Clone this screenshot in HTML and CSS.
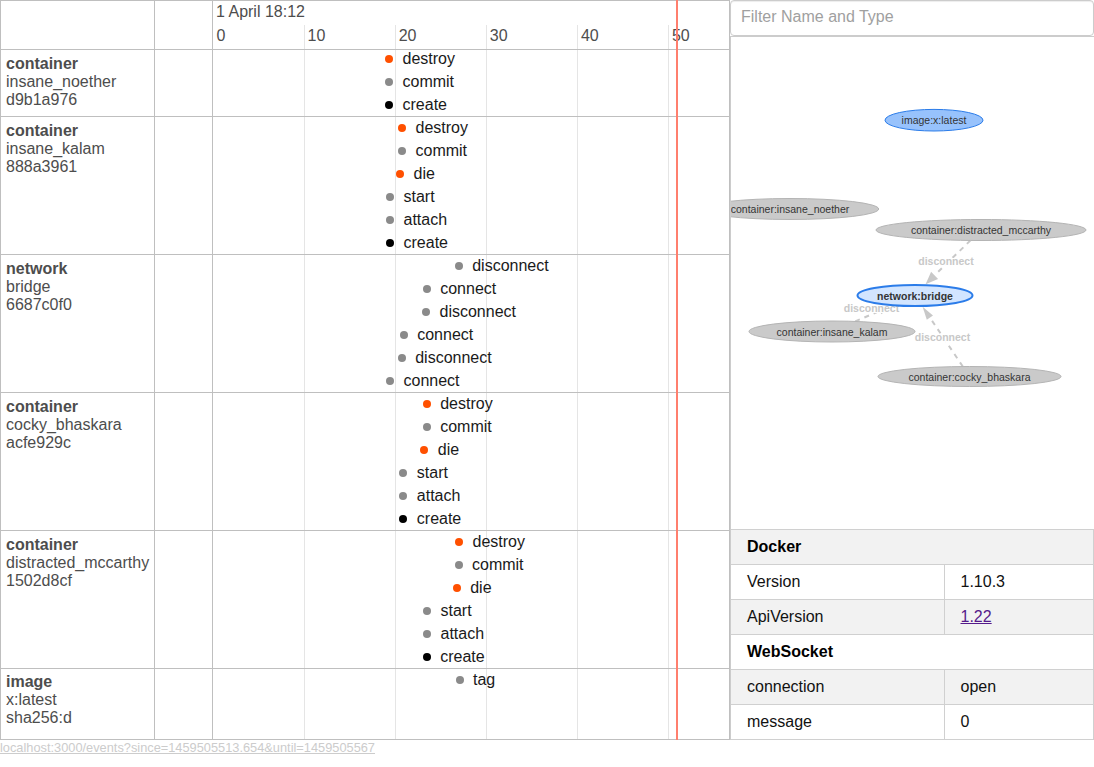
FILE: index.html
```html
<!DOCTYPE html>
<html lang="en">
<head>
<meta charset="utf-8">
<title>Docker events</title>
<link rel="stylesheet" href="styles.css">
</head>
<body>
<div class="app">
  <section class="timeline">
    <div class="grid-lines">
      <div class="gl"></div><div class="gl"></div><div class="gl"></div><div class="gl"></div><div class="gl"></div><div class="gl"></div>
    </div>

    <div class="row row--head">
      <div class="cell label"></div>
      <div class="cell spacer"></div>
      <div class="cell track axis">
        <div class="major">1 April 18:12</div>
        <div class="minor">
          <span class="tl">0</span><span class="tl">10</span><span class="tl">20</span><span class="tl">30</span><span class="tl">40</span><span class="tl">50</span>
        </div>
      </div>
    </div>

    <div class="row">
      <div class="cell label"><b>container</b><span>insane_noether</span><span>d9b1a976</span></div>
      <div class="cell spacer"></div>
      <div class="cell track">
        <ul class="events events--first">
          <li class="event" style="padding-left:172px"><i class="dot dot--alert"></i>destroy</li>
          <li class="event" style="padding-left:172px"><i class="dot"></i>commit</li>
          <li class="event" style="padding-left:172px"><i class="dot dot--create"></i>create</li>
        </ul>
      </div>
    </div>

    <div class="row">
      <div class="cell label"><b>container</b><span>insane_kalam</span><span>888a3961</span></div>
      <div class="cell spacer"></div>
      <div class="cell track">
        <ul class="events">
          <li class="event" style="padding-left:185px"><i class="dot dot--alert"></i>destroy</li>
          <li class="event" style="padding-left:185px"><i class="dot"></i>commit</li>
          <li class="event" style="padding-left:183px"><i class="dot dot--alert"></i>die</li>
          <li class="event" style="padding-left:173px"><i class="dot"></i>start</li>
          <li class="event" style="padding-left:173px"><i class="dot"></i>attach</li>
          <li class="event" style="padding-left:173px"><i class="dot dot--create"></i>create</li>
        </ul>
      </div>
    </div>

    <div class="row">
      <div class="cell label"><b>network</b><span>bridge</span><span>6687c0f0</span></div>
      <div class="cell spacer"></div>
      <div class="cell track">
        <ul class="events">
          <li class="event" style="padding-left:241.7px"><i class="dot"></i>disconnect</li>
          <li class="event" style="padding-left:209.7px"><i class="dot"></i>connect</li>
          <li class="event" style="padding-left:209px"><i class="dot"></i>disconnect</li>
          <li class="event" style="padding-left:186.7px"><i class="dot"></i>connect</li>
          <li class="event" style="padding-left:184.7px"><i class="dot"></i>disconnect</li>
          <li class="event" style="padding-left:173px"><i class="dot"></i>connect</li>
        </ul>
      </div>
    </div>

    <div class="row">
      <div class="cell label"><b>container</b><span>cocky_bhaskara</span><span>acfe929c</span></div>
      <div class="cell spacer"></div>
      <div class="cell track">
        <ul class="events">
          <li class="event" style="padding-left:209.7px"><i class="dot dot--alert"></i>destroy</li>
          <li class="event" style="padding-left:209.7px"><i class="dot"></i>commit</li>
          <li class="event" style="padding-left:207.3px"><i class="dot dot--alert"></i>die</li>
          <li class="event" style="padding-left:186.3px"><i class="dot"></i>start</li>
          <li class="event" style="padding-left:186.3px"><i class="dot"></i>attach</li>
          <li class="event" style="padding-left:186.3px"><i class="dot dot--create"></i>create</li>
        </ul>
      </div>
    </div>

    <div class="row">
      <div class="cell label"><b>container</b><span>distracted_mccarthy</span><span>1502d8cf</span></div>
      <div class="cell spacer"></div>
      <div class="cell track">
        <ul class="events">
          <li class="event" style="padding-left:242px"><i class="dot dot--alert"></i>destroy</li>
          <li class="event" style="padding-left:241.5px"><i class="dot"></i>commit</li>
          <li class="event" style="padding-left:239.7px"><i class="dot dot--alert"></i>die</li>
          <li class="event" style="padding-left:210px"><i class="dot"></i>start</li>
          <li class="event" style="padding-left:210px"><i class="dot"></i>attach</li>
          <li class="event" style="padding-left:209.7px"><i class="dot dot--create"></i>create</li>
        </ul>
      </div>
    </div>

    <div class="row row--last">
      <div class="cell label"><b>image</b><span>x:latest</span><span>sha256:d</span></div>
      <div class="cell spacer"></div>
      <div class="cell track">
        <ul class="events">
          <li class="event" style="padding-left:242.5px"><i class="dot"></i>tag</li>
        </ul>
      </div>
    </div>

    <div class="now" style="left:675px"></div>
  </section>

  <aside class="side">
    <input class="filter" type="text" placeholder="Filter Name and Type">
    <div class="panel">
      <div class="graph">
        <svg width="363" height="492" viewBox="0 0 363 492" xmlns="http://www.w3.org/2000/svg">
          <g class="edge">
            <line x1="239.5" y1="203.4" x2="203.6" y2="238.3"/>
            <polygon points="194.6,247.2 207.1,241.9 200.1,234.8"/>
            <line x1="124.2" y1="284.4" x2="148.9" y2="273.8"/>
            <polygon points="160.8,268.6 150.4,277.2 147.4,270.4"/>
            <line x1="231.8" y1="329.5" x2="198.9" y2="280.6"/>
            <polygon points="191.6,269.8 202,278.5 195.8,282.7"/>
          </g>
          <g class="edge-label">
            <text x="215" y="224">disconnect</text>
            <text x="140.5" y="270.5">disconnect</text>
            <text x="211.5" y="299.5">disconnect</text>
          </g>
          <g class="node node--image">
            <ellipse cx="203" cy="83.2" rx="49" ry="10.8"/>
            <text x="203" y="83.2">image:x:latest</text>
          </g>
          <g class="node">
            <ellipse cx="59" cy="172" rx="88.7" ry="10.5"/>
            <text x="59" y="172">container:insane_noether</text>
          </g>
          <g class="node">
            <ellipse cx="250" cy="193" rx="105" ry="10.5"/>
            <text x="250" y="193">container:distracted_mccarthy</text>
          </g>
          <g class="node node--selected">
            <ellipse cx="184" cy="258.5" rx="57.5" ry="10.5"/>
            <text x="184" y="258.5">network:bridge</text>
          </g>
          <g class="node">
            <ellipse cx="101" cy="294.5" rx="83" ry="10.5"/>
            <text x="101" y="294.5">container:insane_kalam</text>
          </g>
          <g class="node">
            <ellipse cx="238.5" cy="339.5" rx="91.5" ry="10"/>
            <text x="238.5" y="339.5">container:cocky_bhaskara</text>
          </g>
        </svg>
      </div>
      <table class="info">
        <tbody>
          <tr><th colspan="2">Docker</th></tr>
          <tr><td class="k">Version</td><td>1.10.3</td></tr>
          <tr><td class="k">ApiVersion</td><td><a class="api" href="#">1.22</a></td></tr>
          <tr><th colspan="2">WebSocket</th></tr>
          <tr><td class="k">connection</td><td>open</td></tr>
          <tr><td class="k">message</td><td>0</td></tr>
        </tbody>
      </table>
    </div>
  </aside>
</div>
<a class="url" href="#">localhost:3000/events?since=1459505513.654&amp;until=1459505567</a>
</body>
</html>
```

FILE: styles.css
```css
* { box-sizing: border-box; }
html, body { margin: 0; padding: 0; background: #fff; }
body {
  font-family: "Liberation Sans", Arial, sans-serif;
  font-size: 16px;
  color: #1a1a1a;
}

.app { display: flex; align-items: flex-start; }

/* ---------- timeline ---------- */
.timeline {
  position: relative;
  flex: none;
  width: 730px;
  border: 1px solid #bfbfbf;
  border-bottom: 0;
}
.grid-lines {
  position: absolute;
  left: 212px;
  top: 24px;
  bottom: 0;
  width: 516px;
  overflow: hidden;
  display: flex;
  z-index: 0;
}
.gl {
  flex: 0 0 91.1px;
  border-left: 1px solid #e5e5e5;
}
.gl:first-child { border-left-color: transparent; }

.row {
  position: relative;
  z-index: 1;
  display: grid;
  grid-template-columns: 154px 58px 1fr;
  border-bottom: 1px solid #bfbfbf;
}
.row--head { height: 49px; }
.cell { border-right: 1px solid #bfbfbf; }
.track { border-right: 0; }

.label {
  display: flex;
  flex-direction: column;
  padding: 5px 5px 7px;
  line-height: 18px;
  color: #4d4d4d;
  white-space: nowrap;
}
.label b { font-weight: bold; }
.row--last .label { padding-top: 4px; padding-bottom: 12px; }

.axis { color: #4d4d4d; }
.major {
  height: 26px;
  padding: 2px 0 0 3px;
  line-height: 18px;
}
.minor {
  display: flex;
  line-height: 18px;
  overflow: hidden;
}
.tl {
  flex: 0 0 91.1px;
  padding-left: 3.5px;
}

.events {
  list-style: none;
  margin: -1px 0 0;
  padding: 0;
}
.events--first { margin-top: -3px; }
.event {
  display: flex;
  align-items: center;
  height: 23px;
  white-space: nowrap;
  color: #1a1a1a;
}
.dot {
  flex: none;
  width: 8px;
  height: 8px;
  border-radius: 50%;
  background: #8a8a8a;
  margin-right: 9.5px;
}
.dot--alert { background: #ff5000; }
.dot--create { background: #000; }

.now {
  position: absolute;
  top: -1px;
  bottom: 0;
  width: 2px;
  background: #ff7f6e;
  z-index: 2;
}

/* ---------- side panel ---------- */
.side { flex: none; width: 364px; }
.filter {
  display: block;
  width: 364px;
  height: 36px;
  margin: 0;
  padding: 0 10px 2px;
  border: 1px solid #ccc;
  border-radius: 4px;
  box-shadow: inset 0 1px 1px rgba(0, 0, 0, 0.075);
  font-family: "Liberation Sans", Arial, sans-serif;
  font-size: 16px;
  color: #555;
  background: #fff;
  outline: none;
}
.filter::placeholder { color: #a0a0a0; }

.panel { border-left: 1px solid #ccc; }
.graph {
  height: 493px;
  border-top: 1px solid #ccc;
}
.graph svg { display: block; }

.edge line {
  stroke: #c8c8c8;
  stroke-width: 2;
  stroke-dasharray: 5 5;
}
.edge polygon { fill: #c8c8c8; }
.edge-label text {
  font-family: "Liberation Sans", Arial, sans-serif;
  font-size: 10.5px;
  font-weight: bold;
  fill: #c8c8c8;
  stroke: #fff;
  stroke-width: 2px;
  paint-order: stroke;
  text-anchor: middle;
  dominant-baseline: central;
}
.node ellipse { fill: #cacaca; stroke: #b4b4b4; stroke-width: 1; }
.node text {
  font-family: "Liberation Sans", Arial, sans-serif;
  font-size: 10.5px;
  fill: #343434;
  text-anchor: middle;
  dominant-baseline: central;
}
.node--image ellipse { fill: #97c2fc; stroke: #2b7ce9; }
.node--selected ellipse { fill: #d2e5ff; stroke: #2b7ce9; stroke-width: 2; }
.node--selected text { font-weight: bold; }

.info {
  width: 363px;
  border-collapse: collapse;
  font-size: 16px;
  color: #111;
}
.info th,
.info td {
  border: 1px solid #d0d0d0;
  padding: 8px 16px;
  line-height: 18px;
  text-align: left;
}
.info th { font-weight: bold; color: #000; }
.info tr > :first-child { border-left: 0; }
.info tr:nth-child(odd) { background: #f2f2f2; }
.info .k { width: 213px; }
.api { color: #551a8b; text-decoration: underline; }

.url {
  display: block;
  font-size: 12.8px;
  line-height: 15px;
  color: #ccc;
  text-decoration: underline;
}
```
